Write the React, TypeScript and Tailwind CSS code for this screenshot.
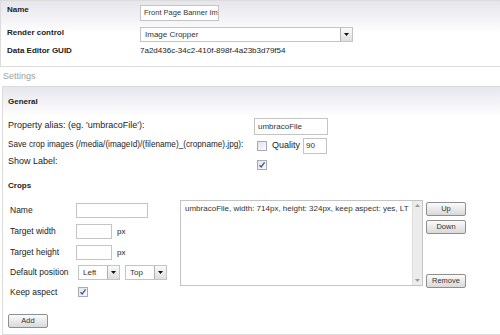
import React from "react";

const font = { fontFamily: '"Liberation Sans", Arial, sans-serif' };

function Checkbox({ checked }: { checked?: boolean }) {
  return (
    <div className="w-[10px] h-[10px] border border-[#a9a9b3] bg-gradient-to-br from-[#e4e4ea] to-[#fafafa] flex items-center justify-center">
      {checked && (
        <svg width="8" height="8" viewBox="0 0 8 8">
          <path d="M1.5 4.2 L3.2 6 L6.6 1.4" stroke="#3b5a9a" strokeWidth="1.3" fill="none" />
        </svg>
      )}
    </div>
  );
}

function Select({ value, w }: { value: string; w: string }) {
  return (
    <div className={`${w} h-[15px] border border-[#c4c4c4] bg-white flex items-stretch`}>
      <div className="flex-1 pl-[4px] text-[8px] leading-[13px] text-[#333]">{value}</div>
      <div className="w-[12px] border-l border-[#b0b0b0] bg-gradient-to-b from-[#fafafa] to-[#dedede] flex items-center justify-center">
        <svg width="5" height="3" viewBox="0 0 5 3">
          <path d="M0 0 L5 0 L2.5 3 Z" fill="#111" />
        </svg>
      </div>
    </div>
  );
}

function Btn({ label, w = "w-[40px]" }: { label: string; w?: string }) {
  return (
    <div className={`${w} h-[14px] border border-[#8f8f8f] rounded-[2px] bg-gradient-to-b from-[#fbfbfb] to-[#d9d9d9] text-[7.5px] leading-[12px] text-[#333] text-center`}>
      {label}
    </div>
  );
}

export default function App() {
  return (
    <div className="w-[500px] h-[335px] bg-white overflow-hidden text-[#222]" style={font}>
      {/* Top panel */}
      <div className="h-[67px] border-t border-b border-l border-[#dcdcdc] bg-gradient-to-b from-[#e5e5ec] via-white to-white">
        <div className="flex items-start h-[16px] mt-[4px]">
          <div className="w-[139px] pl-[6px] text-[8px] leading-[10px] font-bold">Name</div>
          <div className="w-[79px] h-[16px] border border-[#c4c4c4] bg-white pl-[3px] text-[7.5px] leading-[14px] text-[#333] overflow-hidden whitespace-nowrap">
            Front Page Banner Im
          </div>
        </div>
        <div className="flex items-start h-[15px] mt-[6px]">
          <div className="w-[139px] pl-[6px] pt-[1px] text-[8px] leading-[10px] font-bold">Render control</div>
          <Select value="Image Cropper" w="w-[213px]" />
        </div>
        <div className="flex items-start mt-[4px]">
          <div className="w-[139px] pl-[6px] text-[8px] leading-[10px] font-bold">Data Editor GUID</div>
          <div className="text-[8px] leading-[10px] text-[#222]">7a2d436c-34c2-410f-898f-4a23b3d79f54</div>
        </div>
      </div>

      {/* Settings caption */}
      <div className="h-[19px] pl-[3px] text-[9px] leading-[19px] text-[#a0a0a0]">Settings</div>

      {/* Settings box */}
      <div className="ml-[2px] h-[249px] border-t border-b border-l border-[#dcdcdc]">
        <div className="h-[30px] pl-[5px] flex items-center text-[8px] font-bold bg-gradient-to-b from-[#e6e6ee] to-white">
          General
        </div>

        <div className="flex items-center h-[18px]">
          <div className="w-[251px] pl-[5px] text-[9px]">Property alias: (eg. 'umbracoFile'):</div>
          <div className="w-[74px] h-[17px] border border-[#c4c4c4] bg-white pl-[3px] text-[8px] leading-[15px] text-[#333]">
            umbracoFile
          </div>
        </div>

        <div className="flex items-center h-[21px]">
          <div className="w-[251px] pl-[5px] text-[8.2px] whitespace-nowrap">
            Save crop images (/media/(imageId)/(filename)_(cropname).jpg):
          </div>
          <div className="ml-[3px]">
            <Checkbox />
          </div>
          <div className="ml-[5px] text-[9px]">Quality</div>
          <div className="ml-[3px] w-[24px] h-[16px] border border-[#c4c4c4] bg-white pl-[2px] text-[8px] leading-[14px] text-[#333]">
            90
          </div>
        </div>

        <div className="flex items-center h-[18px]">
          <div className="w-[251px] pl-[5px] text-[9px] -mt-[6px]">Show Label:</div>
          <div className="ml-[3px]">
            <Checkbox checked />
          </div>
        </div>

        <div className="h-[24px] pl-[5px] flex items-center text-[8px] font-bold">Crops</div>

        <div className="flex mt-[2px]">
          {/* left form */}
          <div className="w-[177px] pl-[7px]">
            <div className="flex items-center h-[21px]">
              <div className="w-[66px] text-[8.5px]">Name</div>
              <div className="w-[72px] h-[15px] border border-[#c4c4c4] bg-white" />
            </div>
            <div className="flex items-center h-[21px]">
              <div className="w-[66px] text-[8.5px]">Target width</div>
              <div className="w-[36px] h-[15px] border border-[#c4c4c4] bg-white" />
              <div className="ml-[5px] text-[8px]">px</div>
            </div>
            <div className="flex items-center h-[21px]">
              <div className="w-[66px] text-[8.5px]">Target height</div>
              <div className="w-[36px] h-[15px] border border-[#c4c4c4] bg-white" />
              <div className="ml-[5px] text-[8px]">px</div>
            </div>
            <div className="flex items-center h-[19px]">
              <div className="w-[68px] text-[8.5px] whitespace-nowrap">Default position</div>
              <Select value="Left" w="w-[42px]" />
              <div className="ml-[5px]">
                <Select value="Top" w="w-[42px]" />
              </div>
            </div>
            <div className="flex items-center h-[20px]">
              <div className="w-[68px] text-[8.5px]">Keep aspect</div>
              <Checkbox checked />
            </div>
            <div className="mt-[12px] -ml-[2px]">
              <Btn label="Add" />
            </div>
          </div>

          {/* textarea */}
          <div className="w-[243px] h-[86px] border border-[#c4c4c4] bg-white flex">
            <div className="flex-1 pl-[4px] pt-[3px] text-[8px] leading-[10px] text-[#333] whitespace-nowrap overflow-hidden">
              umbracoFile, width: 714px, height: 324px, keep aspect: yes, LT
            </div>
            <div className="w-[10px] bg-[#ececec] border-l border-[#dedede] flex flex-col justify-between items-center py-[3px]">
              <svg width="5" height="3" viewBox="0 0 5 3">
                <path d="M0 3 L5 3 L2.5 0 Z" fill="#999" />
              </svg>
              <svg width="5" height="3" viewBox="0 0 5 3">
                <path d="M0 0 L5 0 L2.5 3 Z" fill="#999" />
              </svg>
            </div>
          </div>

          {/* buttons */}
          <div className="ml-[3px] pt-[2px] h-[88px] flex flex-col">
            <Btn label="Up" />
            <div className="mt-[4px]">
              <Btn label="Down" />
            </div>
            <div className="mt-auto">
              <Btn label="Remove" />
            </div>
          </div>
        </div>
      </div>
    </div>
  );
}
